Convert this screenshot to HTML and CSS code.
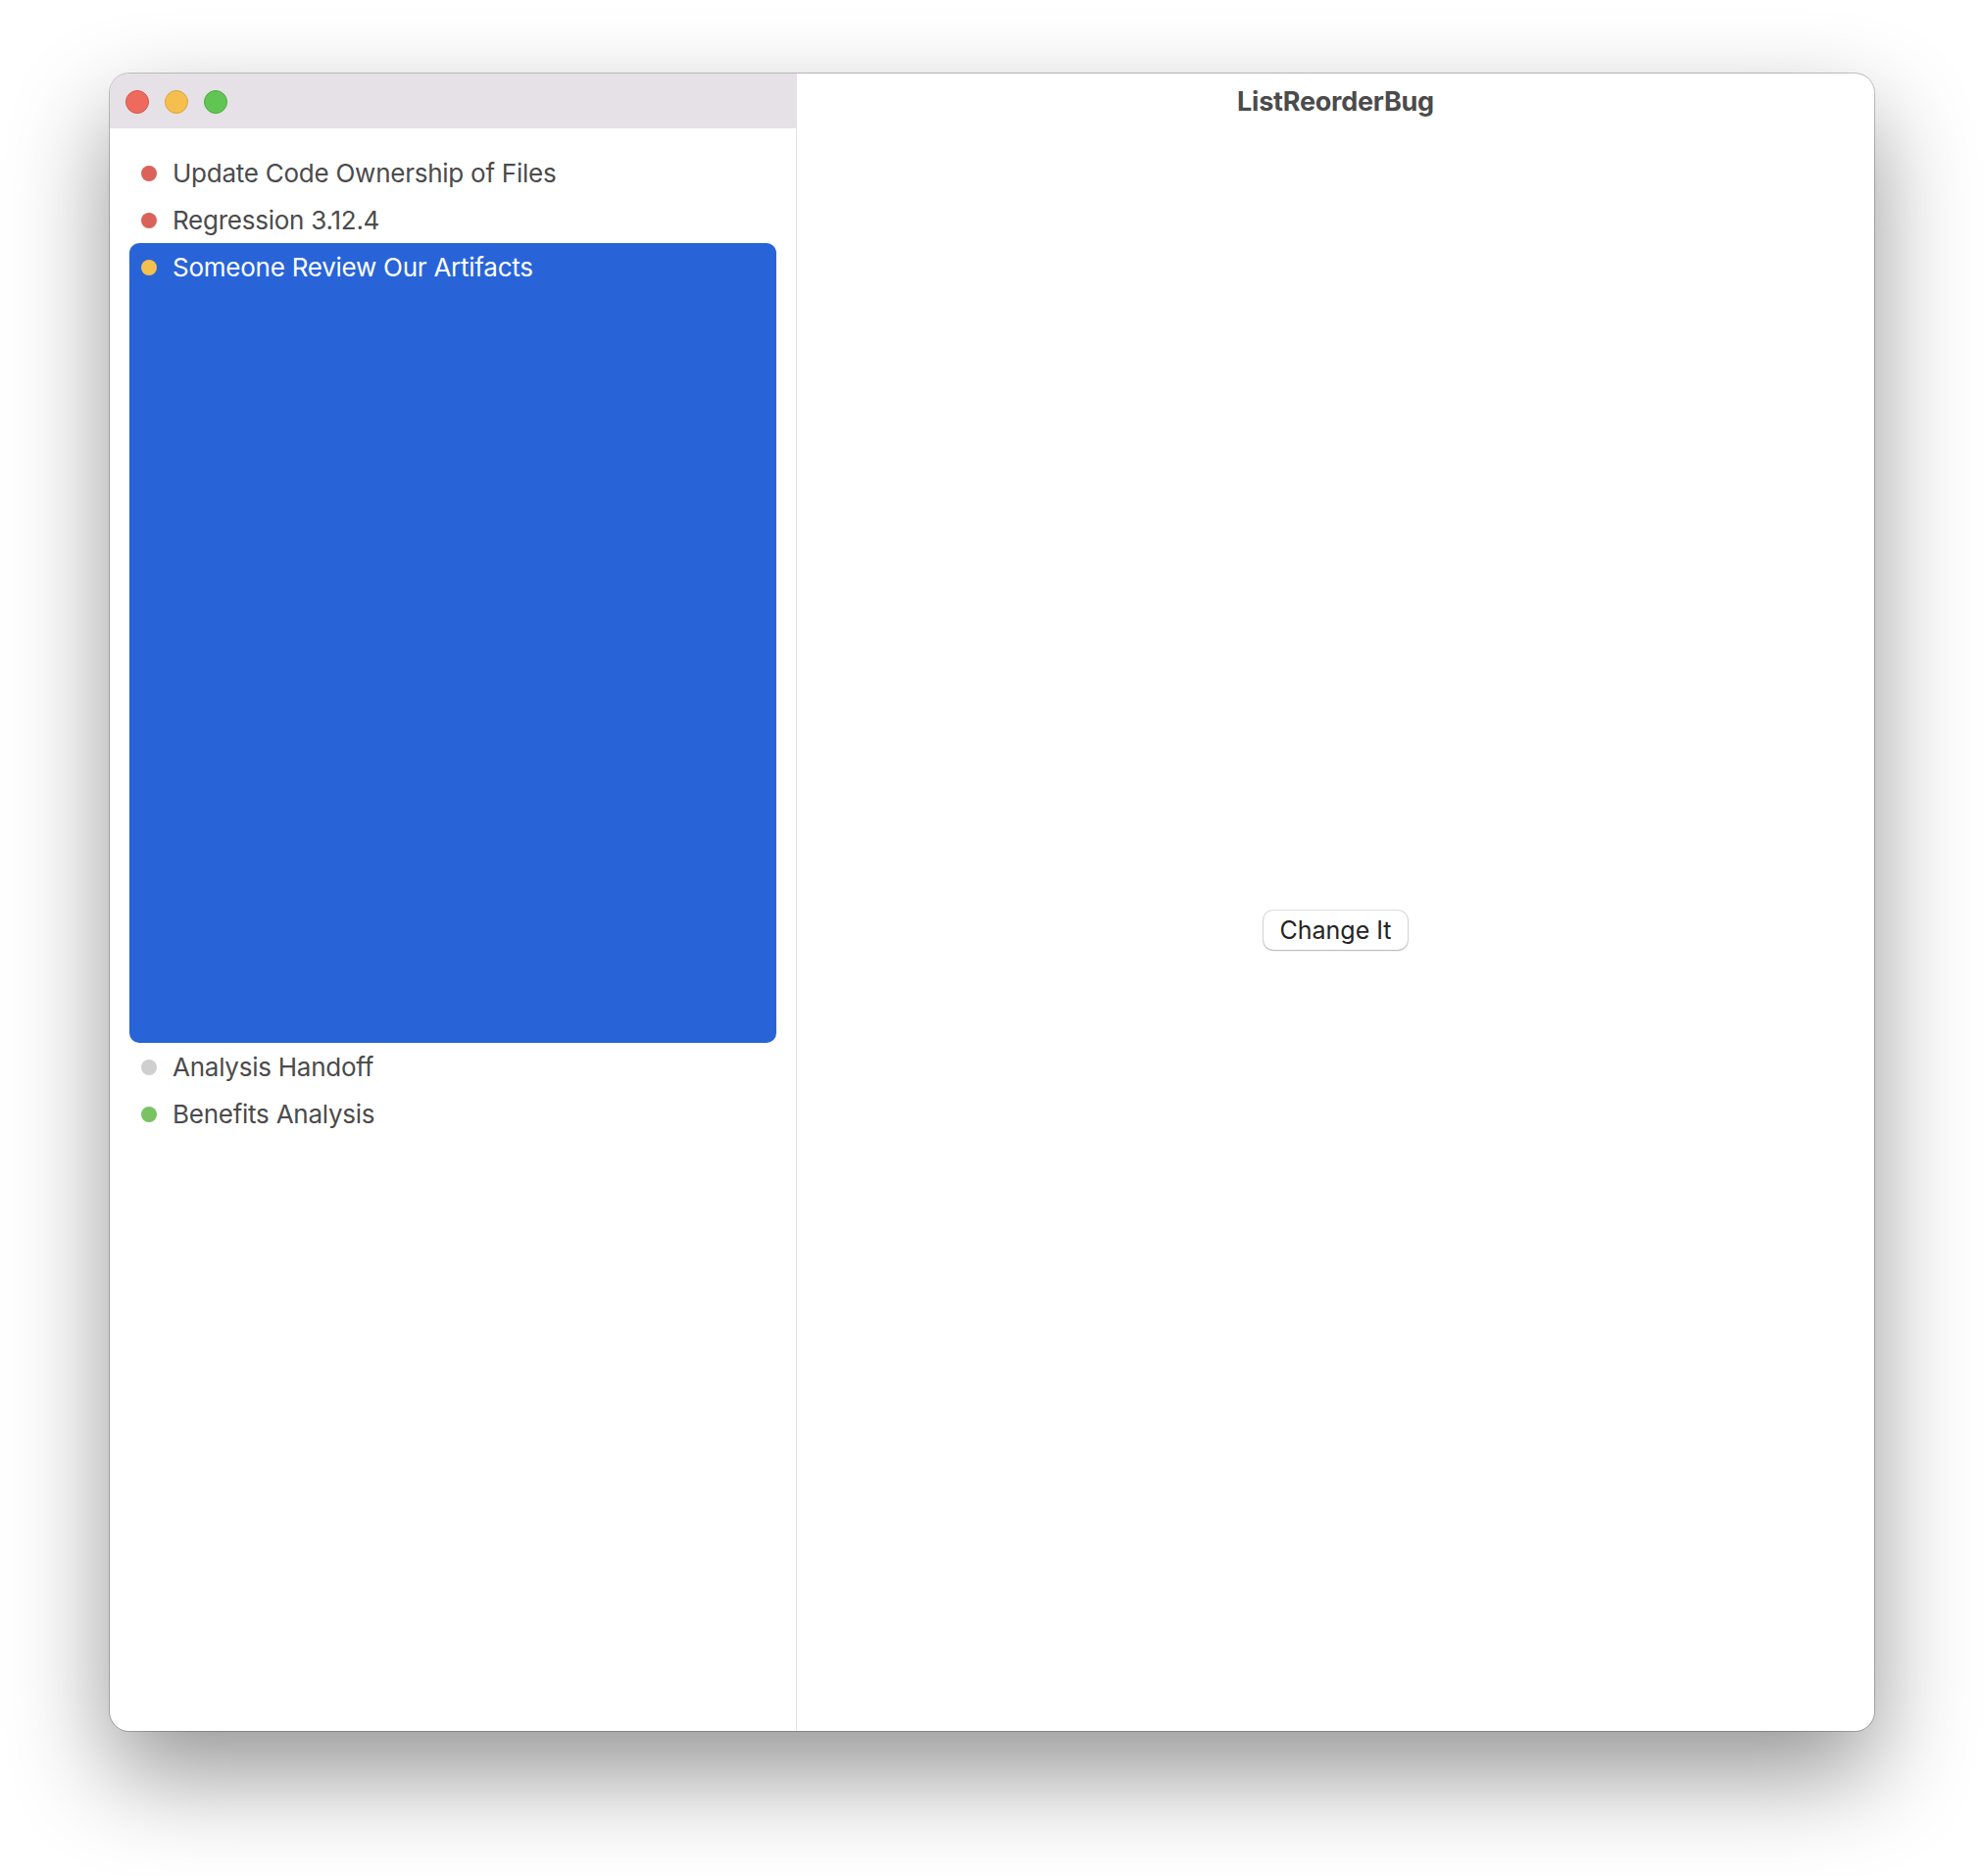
FILE: index.html
```html
<!DOCTYPE html>
<html lang="en">
<head>
    <meta charset="UTF-8">
    <title>ListReorderBug</title>
    <link rel="stylesheet" href="styles.css">
</head>
<body>
    <div class="window">
        <!-- Sidebar -->
        <div class="sidebar">
            <div class="sidebar-bar">
                <span class="light light-close"></span>
                <span class="light light-min"></span>
                <span class="light light-zoom"></span>
            </div>
            <ul class="list">
                <li class="row"><span class="dot dot-red"></span><span class="label">Update Code Ownership of Files</span></li>
                <li class="row"><span class="dot dot-red"></span><span class="label">Regression 3.12.4</span></li>
                <li class="row selected"><span class="dot dot-yellow"></span><span class="label">Someone Review Our Artifacts</span></li>
                <li class="row"><span class="dot dot-gray"></span><span class="label">Analysis Handoff</span></li>
                <li class="row"><span class="dot dot-green"></span><span class="label">Benefits Analysis</span></li>
            </ul>
        </div>

        <!-- Detail -->
        <div class="detail">
            <div class="detail-bar">
                <span class="title">ListReorderBug</span>
            </div>
            <div class="detail-body">
                <button class="btn">Change It</button>
            </div>
        </div>
    </div>
</body>
</html>
```

FILE: styles.css
```css
/* Global */
body {
    margin: 0;
    padding: 0;
    width: 2024px;
    height: 1914px;
    background-color: #fff;
    font-family: Inter, "Noto Sans", sans-serif;
    color: #4b4b4b;
    overflow: hidden;
}

/* Window frame */
.window {
    display: flex;
    width: 1800px;
    height: 1691px;
    margin: 75px 0 0 112px;
    border-radius: 20px;
    overflow: hidden;
    background-color: #fff;
    box-shadow: 0 0 0 1px rgba(0, 0, 0, 0.22),
                0 44px 100px rgba(0, 0, 0, 0.42);
}

/* Sidebar */
.sidebar {
    width: 701px;
    flex-shrink: 0;
    box-sizing: border-box;
    border-right: 1px solid #e4e4e4;
    display: flex;
    flex-direction: column;
}

.sidebar-bar {
    height: 56px;
    background-color: #e5e1e6;
    display: flex;
    align-items: center;
    gap: 16px;
    padding: 2px 0 0 16px;
    box-sizing: border-box;
}

.light {
    width: 24px;
    height: 24px;
    border-radius: 50%;
    box-sizing: border-box;
}

.light-close {
    background-color: #ee6a5f;
    border: 1px solid #d5564c;
}

.light-min {
    background-color: #f5bf4f;
    border: 1px solid #dca33a;
}

.light-zoom {
    background-color: #61c554;
    border: 1px solid #4aab3d;
}

.list {
    list-style: none;
    margin: 0;
    padding: 21px 20px 0;
}

.row {
    display: flex;
    align-items: flex-start;
    height: 48px;
    padding-left: 12px;
    box-sizing: border-box;
    font-size: 26px;
    letter-spacing: -0.25px;
    line-height: 48px;
}

.row.selected {
    height: 816px;
    background-color: #2864d8;
    border-radius: 10px;
    color: #fff;
}

.dot {
    width: 16px;
    height: 16px;
    border-radius: 50%;
    margin: 17px 16px 0 0;
    flex-shrink: 0;
}

.label {
    padding-top: 1px;
}

.dot-red { background-color: #d9625a; }
.dot-yellow { background-color: #f6c04f; }
.dot-gray { background-color: #cfcfcf; }
.dot-green { background-color: #7bc262; }

/* Detail */
.detail {
    flex: 1;
    display: flex;
    flex-direction: column;
}

.detail-bar {
    height: 56px;
    display: flex;
    align-items: center;
    justify-content: center;
}

.title {
    font-size: 27px;
    font-weight: 700;
    letter-spacing: -0.25px;
    color: #4b4b4b;
}

.detail-body {
    flex: 1;
    display: flex;
    align-items: center;
    justify-content: center;
}

.btn {
    width: 147px;
    height: 40px;
    padding: 0;
    font-family: Inter, "Noto Sans", sans-serif;
    font-size: 25px;
    color: #242424;
    background-color: #fff;
    border: none;
    border-radius: 10px;
    box-shadow: 0 0 0 1px rgba(0, 0, 0, 0.12),
                0 1px 2px rgba(0, 0, 0, 0.22);
}
```
